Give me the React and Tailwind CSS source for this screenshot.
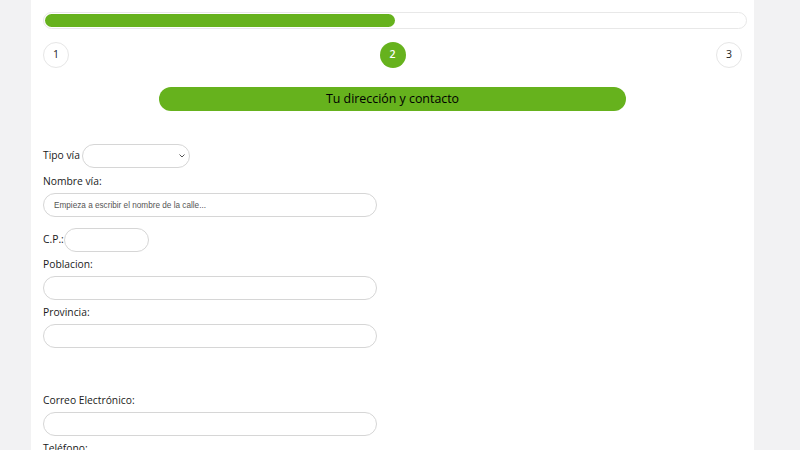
import React from "react";

const green = "bg-[#66b21d]";
const labelCls = "block text-[10.3px] text-[#1a1a1a] leading-[16px] h-[16px]";

function Field({ label, gap = "mt-[5px]", children }) {
  return (
    <div className={`flex flex-col ${gap}`}>
      <label className={labelCls}>{label}</label>
      <div className="mt-[4px]">{children}</div>
    </div>
  );
}

function TextBox({ width = "w-[334px]", placeholder }) {
  return (
    <input
      type="text"
      placeholder={placeholder}
      className={`block ${width} h-[24px] rounded-full border border-[#d6d6d6] bg-white px-[10px] text-[8.2px] font-['Liberation_Sans',Arial,sans-serif] text-[#333] placeholder:text-[#555] outline-none`}
    />
  );
}

export default function App() {
  return (
    <div className="h-[450px] w-[800px] overflow-hidden bg-[#f2f2f3] font-['Open_Sans',sans-serif]">
      <div className="ml-[31px] w-[723px] h-full bg-white pl-[12px] pr-[7px] pt-[12px]">
        {/* Progress */}
        <div className="h-[17px] w-[704px] rounded-full border border-[#e8e8e8] bg-white p-[1px]">
          <div className={`h-[13px] w-[350px] rounded-full ${green}`} />
        </div>

        {/* Steps */}
        <div className="mt-[13px] flex w-[699px] items-center justify-between">
          <div className="flex h-[26px] w-[26px] items-center justify-center rounded-full border border-[#e6e6e6] text-[10.5px] text-[#222]">1</div>
          <div className={`flex h-[26px] w-[26px] items-center justify-center rounded-full ${green} text-[10.5px] font-semibold text-white`}>2</div>
          <div className="flex h-[26px] w-[26px] items-center justify-center rounded-full border border-[#e6e6e6] text-[10.5px] text-[#222]">3</div>
        </div>

        {/* Title */}
        <div className="mt-[19px] ml-[116px] flex h-[24px] w-[467px] items-center justify-center rounded-full bg-[#66b21d] text-[12.4px] text-black">
          Tu dirección y contacto
        </div>

        {/* Form */}
        <div className="mt-[33px] flex flex-col">
          <div className="flex items-center gap-[2px]">
            <span className="text-[10.3px] text-[#1a1a1a]">Tipo vía</span>
            <div className="relative">
              <select className="block h-[24px] w-[108px] appearance-none rounded-full border border-[#d6d6d6] bg-white px-2 text-[10px] outline-none">
                <option></option>
              </select>
              <svg className="pointer-events-none absolute right-[5px] top-[10px]" width="6" height="4" viewBox="0 0 6 4">
                <path d="M0.5 0.5 L3 3 L5.5 0.5" fill="none" stroke="#555" strokeWidth="1" />
              </svg>
            </div>
          </div>

          <Field label="Nombre vía:">
            <TextBox placeholder="Empieza a escribir el nombre de la calle..." />
          </Field>

          <div className="mt-[11px] flex items-center">
            <span className="text-[10.3px] text-[#1a1a1a]">C.P.:</span>
            <TextBox width="w-[85px]" />
          </div>

          <Field label="Poblacion:" gap="mt-[4px]">
            <TextBox />
          </Field>

          <Field label="Provincia:" gap="mt-[4px]">
            <TextBox />
          </Field>

          <Field label="Correo Electrónico:" gap="mt-[44px]">
            <TextBox />
          </Field>

          <Field label="Teléfono:" gap="mt-[4px]">
            <TextBox />
          </Field>
        </div>
      </div>
    </div>
  );
}
